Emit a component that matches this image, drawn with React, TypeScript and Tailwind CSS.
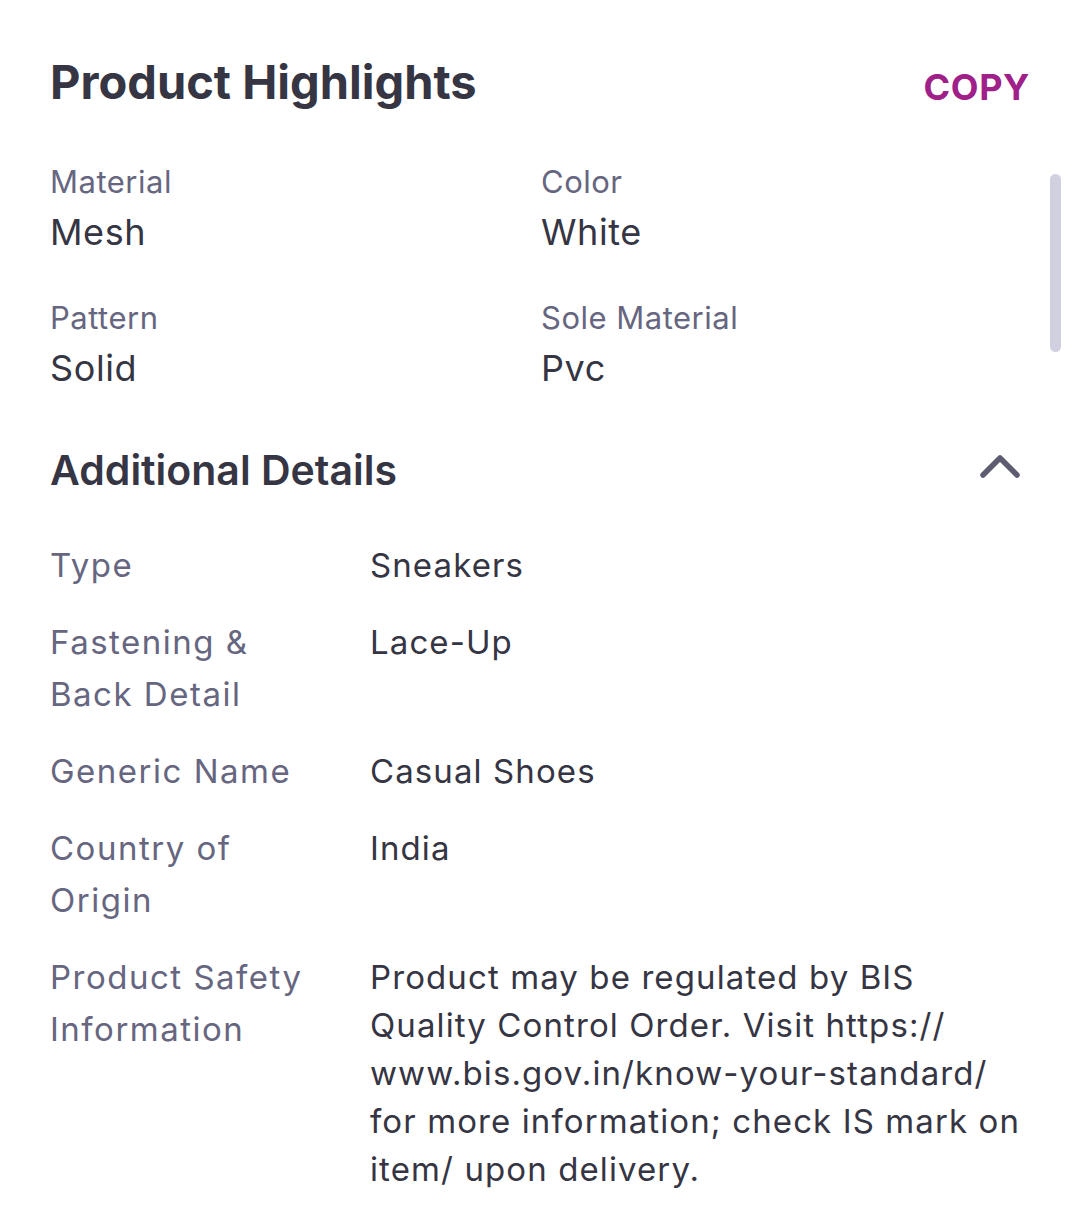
const highlights = [
  { label: 'Material', value: 'Mesh' },
  { label: 'Color', value: 'White' },
  { label: 'Pattern', value: 'Solid' },
  { label: 'Sole Material', value: 'Pvc' },
];

const details = [
  { label: 'Type', value: 'Sneakers' },
  { label: 'Fastening & Back Detail', value: 'Lace-Up' },
  { label: 'Generic Name', value: 'Casual Shoes' },
  { label: 'Country of Origin', value: 'India' },
  {
    label: 'Product Safety Information',
    value:
      'Product may be regulated by BIS Quality Control Order. Visit https:// www.bis.gov.in/know-your-standard/ for more information; check IS mark on item/ upon delivery.',
  },
];

export default function App() {
  return (
    <div
      className="relative min-h-[1211px] w-[1080px] bg-white pl-[50px] pr-[50px] pt-[52px]"
      style={{ fontFamily: 'Inter, "Open Sans", sans-serif' }}
    >
      {/* scroll indicator */}
      <div className="absolute left-[1050px] top-[174px] h-[178px] w-[11px] rounded-full bg-[#d0d0e1]" />

      <div className="flex items-center justify-between">
        <h1 className="text-[47px] font-bold leading-[60px] text-[#353543]">Product Highlights</h1>
        <button className="pt-[10px] text-[36px] font-bold leading-[44px] tracking-[0.6px] text-[#9f2089]">COPY</button>
      </div>

      <div className="mt-[50px] grid grid-cols-[491px_1fr] gap-y-[46px]">
        {highlights.map((h) => (
          <div key={h.label} className="flex flex-col">
            <span className="text-[31px] leading-[40px] tracking-[0.5px] text-[#666680]">{h.label}</span>
            <span className="mt-[10px] text-[36px] leading-[40px] tracking-[0.6px] text-[#353543]">{h.value}</span>
          </div>
        ))}
      </div>

      <div className="mt-[54px] flex items-center justify-between pr-[8px]">
        <h2 className="text-[41px] font-semibold leading-[56px] text-[#353543]">Additional Details</h2>
        <svg width="40" height="26" viewBox="0 0 40 26" className="-mt-[8px] mr-[2px]">
          <polyline
            points="3,22 20,5 37,22"
            fill="none"
            stroke="#5d5d71"
            strokeWidth="5.5"
            strokeLinecap="round"
            strokeLinejoin="round"
          />
        </svg>
      </div>

      <div className="mt-[41px] flex flex-col gap-[25px]">
        {details.map((d) => (
          <div key={d.label} className="grid grid-cols-[320px_1fr]">
            <span className="pr-[46px] text-[33px] leading-[52px] tracking-[1.5px] text-[#666680]">{d.label}</span>
            <span className="pt-[2px] text-[33px] leading-[48px] tracking-[1.1px] text-[#353543]">{d.value}</span>
          </div>
        ))}
      </div>
    </div>
  );
}
